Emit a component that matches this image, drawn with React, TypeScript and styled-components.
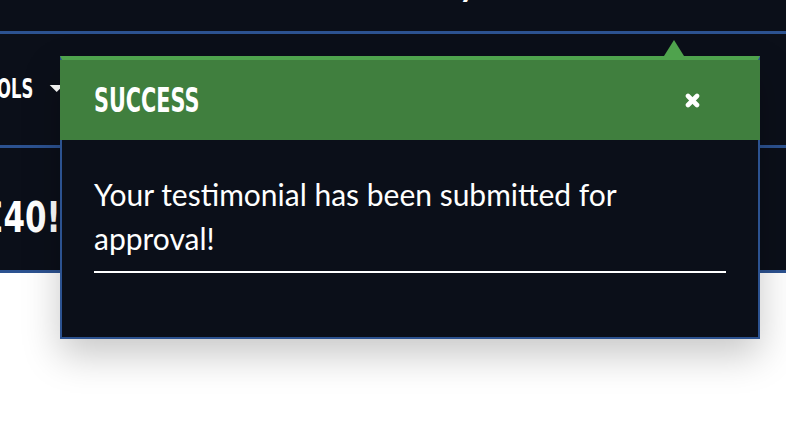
import React from "react";
import styled, { createGlobalStyle } from "styled-components";

const GlobalStyle = createGlobalStyle`
  html, body { margin: 0; padding: 0; background: #ffffff; }
  body { font-family: Lato, "Open Sans", sans-serif; overflow: hidden; }
  #root { width: 786px; height: 430px; position: relative; }
`;

const DARK = "#0b0f19";
const BLUE = "#2c5290";
const GREEN = "#407f3e";
const LIGHT_GREEN = "#4fa34d";

const Page = styled.div`
  width: 786px;
  height: 430px;
  position: relative;
  background: #ffffff;
`;

const TopStrip = styled.div`
  height: 31px;
  background: ${DARK};
  border-bottom: 3px solid ${BLUE};
  overflow: hidden;
  display: flex;
  justify-content: flex-start;
`;

const TopTitle = styled.div`
  margin-top: -50px;
  padding-left: 274px;
  font-family: Lato, sans-serif;
  font-size: 46px;
  line-height: 54px;
  color: #ffffff;
  white-space: nowrap;
`;

const Nav = styled.nav`
  height: 111px;
  background: ${DARK};
  border-bottom: 3px solid ${BLUE};
  display: flex;
  align-items: center;
  overflow: hidden;
`;

const Condensed = styled.span<{ $size: number; $sx?: number }>`
  display: inline-block;
  font-family: "DejaVu Sans Condensed", "Liberation Sans", sans-serif;
  font-weight: 700;
  font-size: ${(p) => p.$size}px;
  line-height: 1;
  color: #ffffff;
  text-transform: uppercase;
  transform: scaleX(${(p) => p.$sx ?? 1});
  transform-origin: left center;
  white-space: nowrap;
`;

const NavItem = styled.div`
  display: flex;
  align-items: center;
  gap: 24px;
  margin-left: -28px;
  margin-top: -2px;
  transform: scaleX(0.7);
  transform-origin: left center;
`;

const Caret = styled.span`
  width: 0;
  height: 0;
  border-left: 10px solid transparent;
  border-right: 10px solid transparent;
  border-top: 7px solid #ffffff;
`;

const Banner = styled.section`
  height: 122px;
  background: ${DARK};
  border-bottom: 3px solid ${BLUE};
  display: flex;
  align-items: center;
  overflow: hidden;
`;

const BannerPrice = styled.div`
  margin-left: -18px;
  margin-top: 16px;
`;

const Popover = styled.div`
  position: absolute;
  left: 60px;
  top: 56px;
  width: 700px;
  box-sizing: border-box;
  border: 2px solid ${BLUE};
  border-top: 4px solid ${LIGHT_GREEN};
  background: ${DARK};
  box-shadow: 0 16px 36px rgba(0, 0, 0, 0.22);

  &::before {
    content: "";
    position: absolute;
    left: 602px;
    top: -20px;
    width: 0;
    height: 0;
    border-left: 10px solid transparent;
    border-right: 10px solid transparent;
    border-bottom: 16px solid ${LIGHT_GREEN};
  }
`;

const PopHeader = styled.div`
  height: 80px;
  margin: 0 -2px;
  padding: 0 60px 0 34px;
  background: ${GREEN};
  display: flex;
  align-items: center;
  justify-content: space-between;
`;

const CloseButton = styled.button`
  border: 0;
  background: transparent;
  padding: 0;
  color: #ffffff;
  display: flex;
  align-items: center;
  cursor: pointer;
`;

const PopBody = styled.div`
  padding: 32px 32px 0 32px;
  height: 197px;
  box-sizing: border-box;
`;

const Message = styled.p`
  margin: 0;
  font-family: Lato, sans-serif;
  font-size: 30px;
  line-height: 44px;
  color: #ffffff;
`;

const Rule = styled.hr`
  margin: 11px 0 0 0;
  border: 0;
  height: 2px;
  background: #ffffff;
`;

function CloseIcon() {
  return (
    <svg width="15" height="15" viewBox="0 0 15 15" aria-hidden="true">
      <g stroke="currentColor" strokeWidth="4.6" strokeLinecap="round">
        <line x1="3" y1="3" x2="12" y2="12" />
        <line x1="12" y1="3" x2="3" y2="12" />
      </g>
    </svg>
  );
}

export default function App() {
  return (
    <>
      <GlobalStyle />
      <Page>
        <TopStrip>
          <TopTitle>Testimony</TopTitle>
        </TopStrip>
        <Nav>
          <NavItem>
            <Condensed $size={26}>Tools</Condensed>
            <Caret />
          </NavItem>
        </Nav>
        <Banner>
          <BannerPrice>
            <Condensed $size={43} $sx={0.8}>£40!</Condensed>
          </BannerPrice>
        </Banner>
        <Popover role="dialog">
          <PopHeader>
            <Condensed $size={33} $sx={0.7}>Success</Condensed>
            <CloseButton aria-label="Close">
              <CloseIcon />
            </CloseButton>
          </PopHeader>
          <PopBody>
            <Message>Your testimonial has been submitted for approval!</Message>
            <Rule />
          </PopBody>
        </Popover>
      </Page>
    </>
  );
}
